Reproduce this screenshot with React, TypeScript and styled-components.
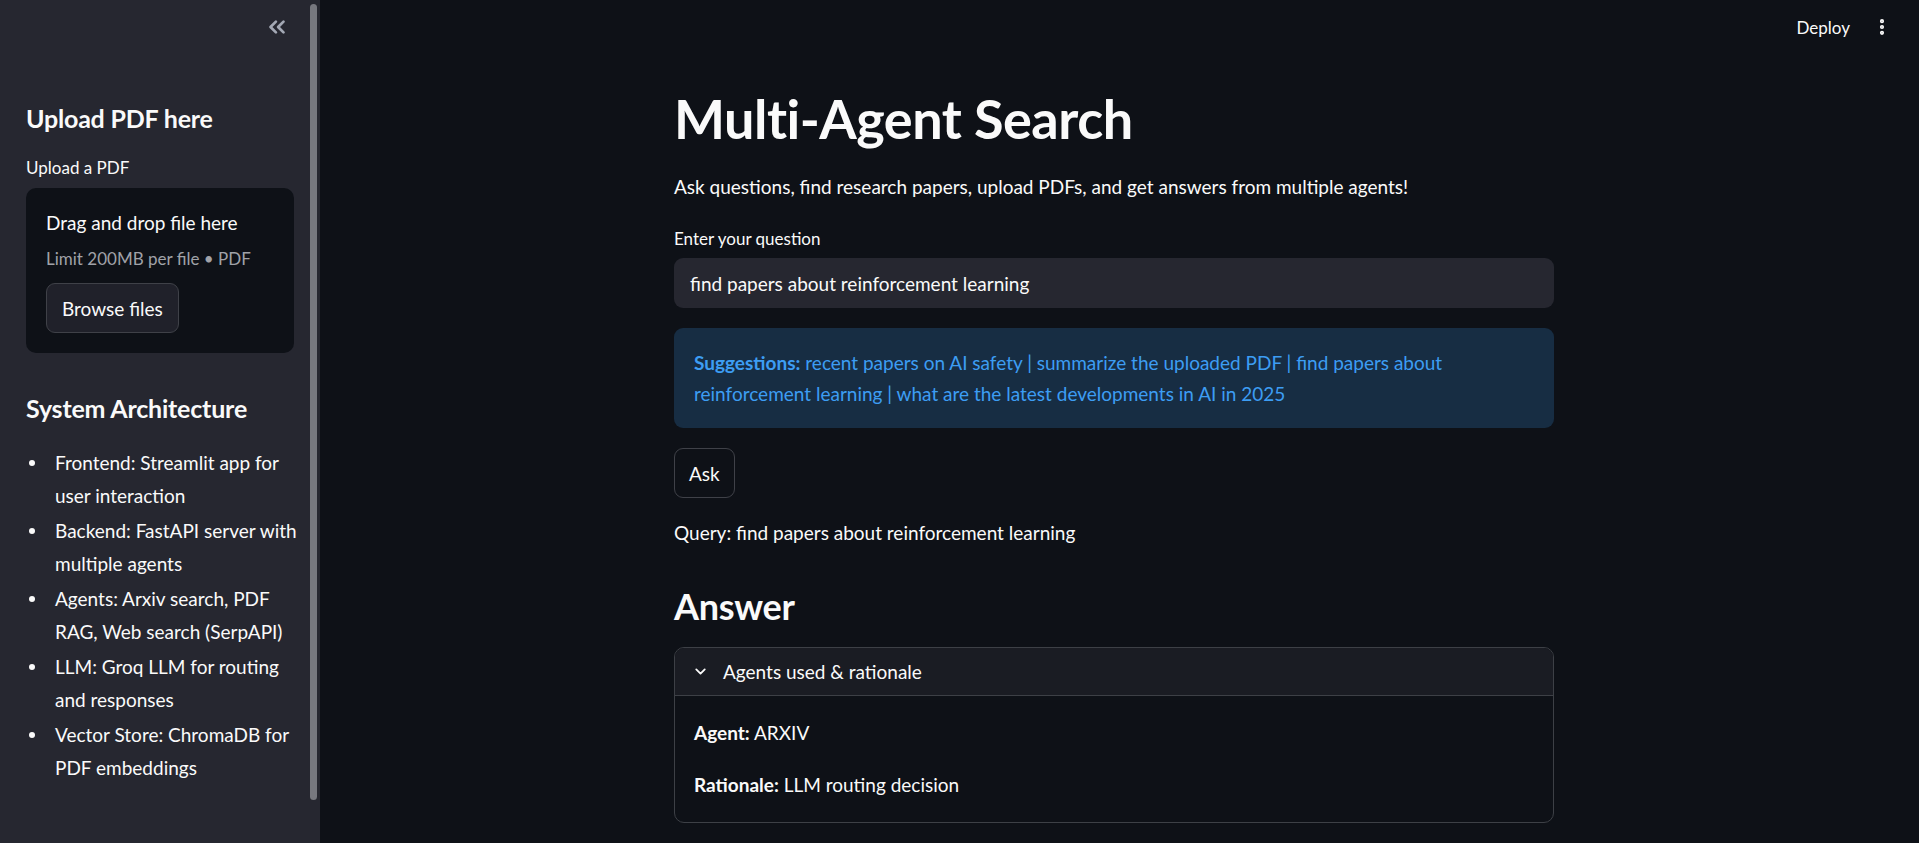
import React from "react";
import styled, { createGlobalStyle } from "styled-components";
import { ChevronsLeft, ChevronDown, EllipsisVertical } from "lucide-react";

const GlobalStyle = createGlobalStyle`
  html, body { margin: 0; padding: 0; height: 100%; }
  body {
    background: #0e1117;
    color: #fafafa;
    font-family: Lato, "Liberation Sans", sans-serif;
    overflow: hidden;
  }
  * { box-sizing: border-box; }
`;

const Shell = styled.div`
  display: flex;
  width: 100vw;
  height: 100vh;
  overflow: hidden;
`;

const Sidebar = styled.aside`
  position: relative;
  flex: 0 0 320px;
  height: 100%;
  background: #262730;
  padding: 0 20px 0 26px;
  display: flex;
  flex-direction: column;
`;

const SidebarTop = styled.div`
  height: 54px;
  display: flex;
  align-items: center;
  justify-content: flex-end;
  padding-right: 10px;
  color: #a3a8b4;
`;

const ScrollThumb = styled.div`
  position: absolute;
  right: 3px;
  top: 4px;
  width: 7px;
  height: 796px;
  border-radius: 4px;
  background: #77787f;
`;

const SideHeading = styled.h3<{ $top: number }>`
  margin: ${(p) => p.$top}px 0 0;
  font-size: 25px;
  line-height: 30px;
  font-weight: 700;
  letter-spacing: -0.2px;
`;

const SmallLabel = styled.div<{ $top: number }>`
  margin-top: ${(p) => p.$top}px;
  font-size: 17px;
  line-height: 22px;
`;

const DropZone = styled.div`
  margin-top: 9px;
  margin-right: 6px;
  background: #0e1117;
  border-radius: 10px;
  padding: 21px 20px 20px;
  display: flex;
  flex-direction: column;
  align-items: flex-start;
`;

const DropTitle = styled.div`
  font-size: 19px;
  line-height: 28px;
`;

const DropHint = styled.div`
  margin-top: 11px;
  font-size: 17px;
  line-height: 22px;
  color: #a0a2a8;
`;

const GhostButton = styled.button<{ $bg?: string; $top: number; $pad: number }>`
  margin-top: ${(p) => p.$top}px;
  height: 50px;
  padding: 0 ${(p) => p.$pad}px;
  background: ${(p) => p.$bg ?? "transparent"};
  border: 1px solid #3f4148;
  border-radius: 9px;
  color: #fafafa;
  font-family: inherit;
  font-size: 19px;
`;

const BulletList = styled.ul`
  margin: 23px 0 0;
  padding: 0;
  list-style: none;
`;

const BulletItem = styled.li`
  display: flex;
  align-items: flex-start;
  font-size: 19px;
  line-height: 33px;
  margin-bottom: 2px;
  &::before {
    content: "";
    flex: none;
    width: 6px;
    height: 6px;
    border-radius: 50%;
    background: #fafafa;
    margin: 14px 20px 0 3px;
  }
`;

const Main = styled.main`
  flex: 1;
  height: 100%;
  display: flex;
  flex-direction: column;
  padding-right: 11px;
`;

const TopBar = styled.header`
  height: 54px;
  display: flex;
  align-items: center;
  justify-content: flex-end;
  gap: 22px;
  padding-right: 27px;
  margin-right: -11px;
`;

const DeployLink = styled.span`
  font-size: 17px;
  color: #fafafa;
`;

const Kebab = styled.span`
  display: flex;
  color: #fafafa;
`;

const Column = styled.div`
  width: 880px;
  margin: 0 auto;
  display: flex;
  flex-direction: column;
  align-items: flex-start;
`;

const Title = styled.h1`
  margin: 31px 0 0;
  font-size: 54px;
  line-height: 68px;
  font-weight: 700;
  letter-spacing: -0.5px;
`;

const Para = styled.p<{ $top: number }>`
  margin: ${(p) => p.$top}px 0 0;
  font-size: 19px;
  line-height: 32px;
`;

const FieldLabel = styled.label`
  margin-top: 24px;
  font-size: 17px;
  line-height: 24px;
`;

const TextInput = styled.div`
  margin-top: 7px;
  width: 100%;
  height: 50px;
  background: #262730;
  border-radius: 9px;
  padding: 0 16px;
  display: flex;
  align-items: center;
  font-size: 19px;
`;

const InfoBox = styled.div`
  margin-top: 20px;
  width: 100%;
  background: #172d43;
  border-radius: 9px;
  padding: 19px 20px;
  color: #3d9df3;
  font-size: 19px;
  line-height: 31px;
`;

const Strong = styled.strong`
  font-weight: 700;
`;

const SectionTitle = styled.h2`
  margin: 36px 0 0;
  font-size: 36px;
  line-height: 43px;
  font-weight: 700;
  letter-spacing: -0.3px;
`;

const Expander = styled.details`
  margin-top: 19px;
  width: 100%;
  border: 1px solid #3d4046;
  border-radius: 10px;
  overflow: hidden;
`;

const ExpanderHead = styled.summary`
  list-style: none;
  height: 48px;
  display: flex;
  align-items: center;
  gap: 14px;
  padding-left: 17px;
  background: #1a1c23;
  border-bottom: 1px solid #3d4046;
  font-size: 19px;
  &::-webkit-details-marker { display: none; }
`;

const ExpanderBody = styled.div`
  padding: 21px 19px 21px;
  display: flex;
  flex-direction: column;
  gap: 20px;
`;

const BodyLine = styled.div`
  font-size: 19px;
  line-height: 32px;
`;

const architecture = [
  "Frontend: Streamlit app for user interaction",
  "Backend: FastAPI server with multiple agents",
  "Agents: Arxiv search, PDF RAG, Web search (SerpAPI)",
  "LLM: Groq LLM for routing and responses",
  "Vector Store: ChromaDB for PDF embeddings",
];

export default function App() {
  return (
    <>
      <GlobalStyle />
      <Shell>
        <Sidebar>
          <ScrollThumb />
          <SidebarTop>
            <ChevronsLeft size={26} strokeWidth={2.5} />
          </SidebarTop>
          <SideHeading $top={49}>Upload PDF here</SideHeading>
          <SmallLabel $top={24}>Upload a PDF</SmallLabel>
          <DropZone>
            <DropTitle>Drag and drop file here</DropTitle>
            <DropHint>Limit 200MB per file • PDF</DropHint>
            <GhostButton $bg="#20212a" $top={13} $pad={15}>
              Browse files
            </GhostButton>
          </DropZone>
          <SideHeading $top={40}>System Architecture</SideHeading>
          <BulletList>
            {architecture.map((item) => (
              <BulletItem key={item}>
                <span>{item}</span>
              </BulletItem>
            ))}
          </BulletList>
        </Sidebar>
        <Main>
          <TopBar>
            <DeployLink>Deploy</DeployLink>
            <Kebab>
              <EllipsisVertical size={20} strokeWidth={3} />
            </Kebab>
          </TopBar>
          <Column>
            <Title>Multi-Agent Search</Title>
            <Para $top={18}>
              Ask questions, find research papers, upload PDFs, and get answers from multiple agents!
            </Para>
            <FieldLabel>Enter your question</FieldLabel>
            <TextInput>find papers about reinforcement learning</TextInput>
            <InfoBox>
              <Strong>Suggestions:</Strong> recent papers on AI safety | summarize the uploaded PDF | find papers about
              reinforcement learning | what are the latest developments in AI in 2025
            </InfoBox>
            <GhostButton $top={20} $pad={14}>
              Ask
            </GhostButton>
            <Para $top={19}>Query: find papers about reinforcement learning</Para>
            <SectionTitle>Answer</SectionTitle>
            <Expander open>
              <ExpanderHead>
                <ChevronDown size={17} strokeWidth={2.5} />
                Agents used &amp; rationale
              </ExpanderHead>
              <ExpanderBody>
                <BodyLine>
                  <Strong>Agent:</Strong> ARXIV
                </BodyLine>
                <BodyLine>
                  <Strong>Rationale:</Strong> LLM routing decision
                </BodyLine>
              </ExpanderBody>
            </Expander>
          </Column>
        </Main>
      </Shell>
    </>
  );
}
